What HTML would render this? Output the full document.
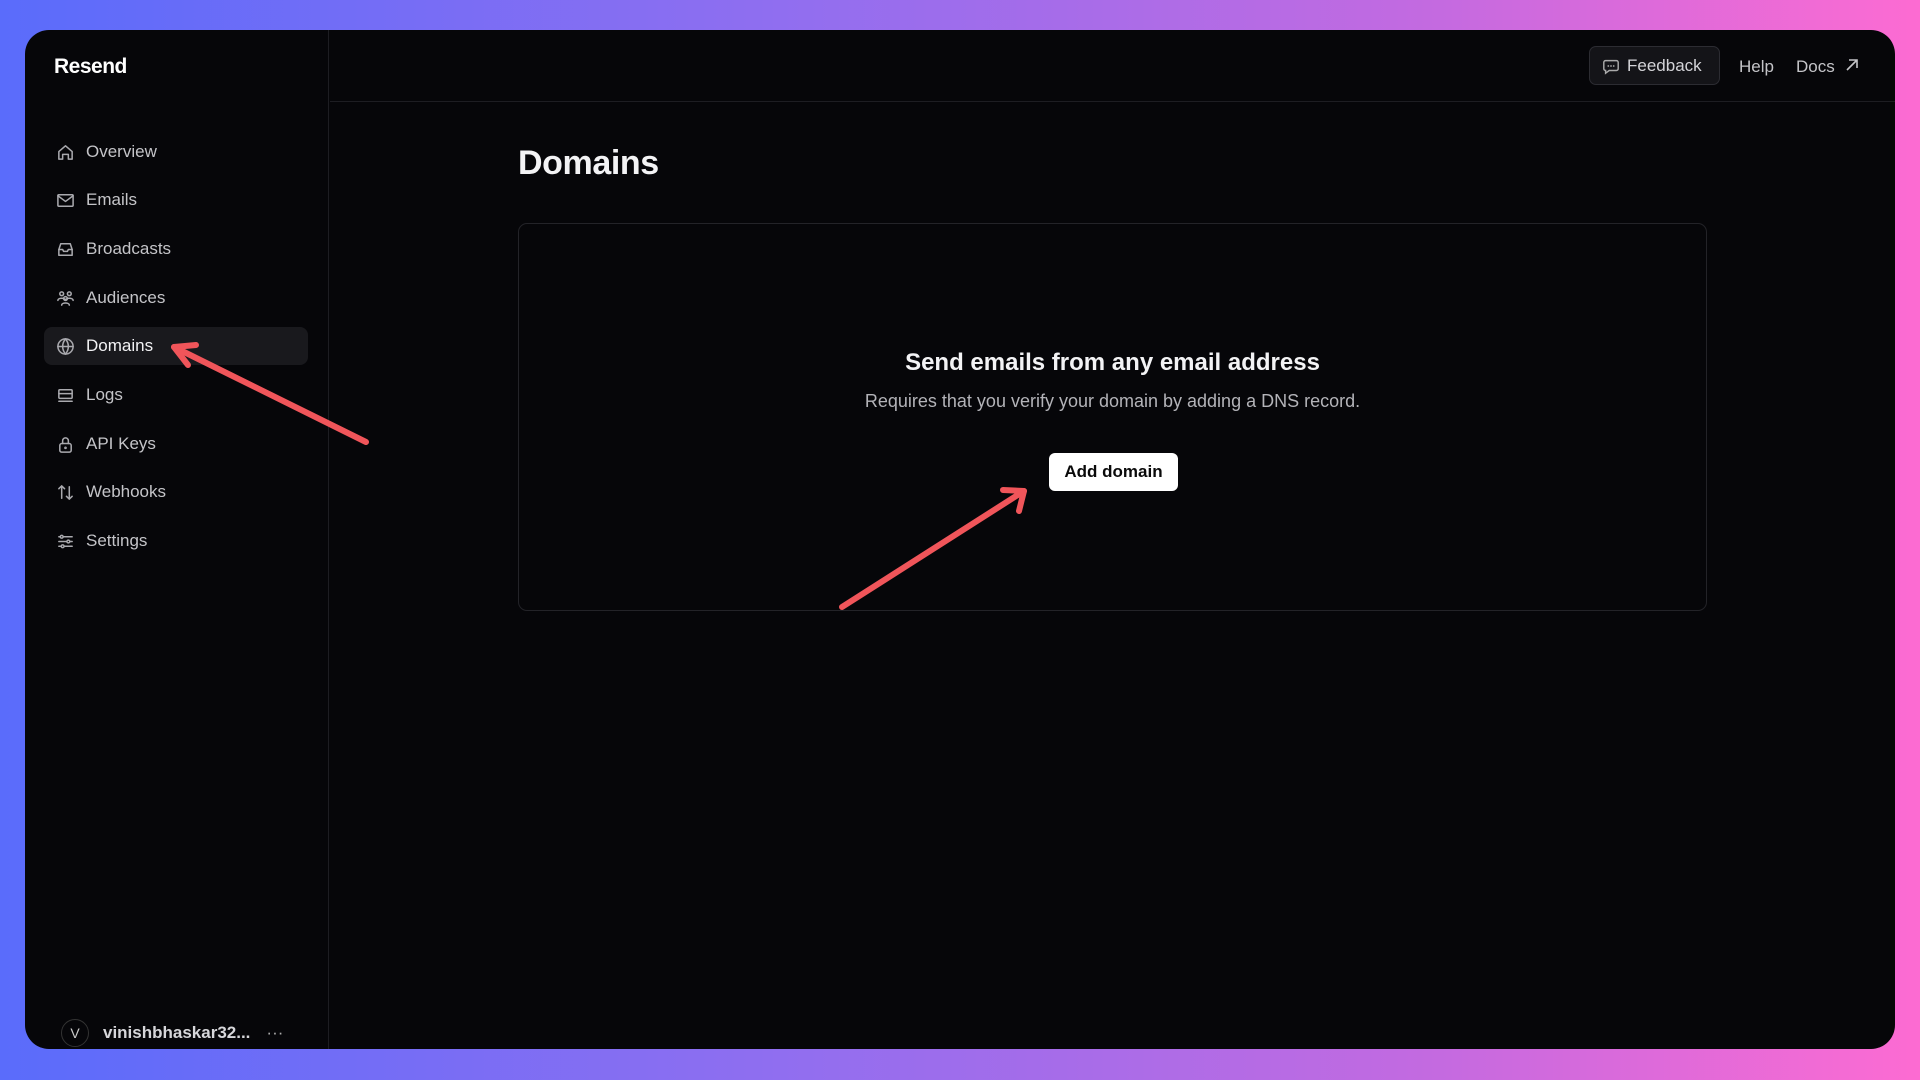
<!DOCTYPE html>
<html><head><meta charset="utf-8"><style>
*{margin:0;padding:0;box-sizing:border-box}
body{width:1920px;height:1080px;overflow:hidden;font-family:"Liberation Sans",sans-serif;background:linear-gradient(90deg,#5a6cfb 0%,#8f6ef0 40%,#c46ae0 75%,#fd6bd2 100%);position:relative}
.win{position:absolute;left:25px;top:30px;width:1870px;height:1019px;background:#060609;border-radius:24px;overflow:hidden}
.side{position:absolute;left:0;top:0;width:304px;height:100%;border-right:1px solid #1d1d22}
.logo{position:absolute;left:29px;top:25px;color:#fff;font-weight:bold;font-size:21px;letter-spacing:-0.5px}
.nav{position:absolute;left:19px;width:264px;height:38px;border-radius:8px;color:#c4c4c8;font-size:17px;display:flex;align-items:center;padding-left:12px}
.nav svg{width:19px;height:19px;margin-right:11px;stroke:#a9a9ae;fill:none;stroke-width:1.6;stroke-linecap:round;stroke-linejoin:round}
.nav.act{background:#19191d;color:#f2f2f4}
.hdr{position:absolute;left:305px;right:0;top:71px;border-top:1px solid #1d1d22}
.fb{position:absolute;left:1564px;top:16px;width:131px;height:39px;border:1px solid #2c2c32;border-radius:7px;background:#141418;color:#d4d4d8;font-size:17px;display:flex;align-items:center;padding-left:12px}
.top{position:absolute;top:27px;color:#c4c4c8;font-size:17px}
h1{position:absolute;left:493px;top:114px;color:#f3f3f5;font-size:34px;font-weight:bold;letter-spacing:-0.4px}
.card{position:absolute;left:493px;top:193px;width:1189px;height:388px;border:1px solid #232328;border-radius:9px;text-align:center}
.card h2{position:absolute;top:125px;width:100%;color:#f3f3f5;font-size:24px;font-weight:bold}
.card p{position:absolute;top:167px;width:100%;color:#b3b3b8;font-size:18px}
.btn{position:absolute;left:530px;top:229px;width:129px;height:38px;background:#fff;border-radius:6px;color:#0a0a0a;font-size:17px;font-weight:bold;line-height:38px}
.user{position:absolute;left:36px;top:989px;display:flex;align-items:center;color:#d6d6da;font-size:17px;font-weight:bold}
.av{width:28px;height:28px;border-radius:50%;border:1px solid #333;color:#ccc;font-size:14px;display:flex;align-items:center;justify-content:center;margin-right:14px;font-weight:normal}
</style></head><body>
<div class="win">
 <div class="side">
  <div class="logo">Resend</div>
  <div class="nav" style="top:103px"><svg viewBox="0 0 20 20"><path d="M3 9l7-6 7 6v8h-4v-5H7v5H3z"/></svg>Overview</div>
  <div class="nav" style="top:151px"><svg viewBox="0 0 20 20"><rect x="2" y="4" width="16" height="12" rx="1"/><path d="M2 5l8 6 8-6"/></svg>Emails</div>
  <div class="nav" style="top:200px"><svg viewBox="0 0 20 20"><path d="M3 10l2-6h10l2 6v6H3z"/><path d="M3 10h4l1 2h4l1-2h4"/></svg>Broadcasts</div>
  <div class="nav" style="top:249px"><svg viewBox="0 0 20 20"><circle cx="6" cy="5" r="2"/><circle cx="14" cy="5" r="2"/><circle cx="10" cy="10" r="2"/><path d="M2 12c0-3 8-3 8 0M10 12c0-3 8-3 8 0M6 17c0-3 8-3 8 0"/></svg>Audiences</div>
  <div class="nav act" style="top:297px"><svg viewBox="0 0 20 20"><circle cx="10" cy="10" r="8"/><path d="M2 10h16M10 2c-4 5-4 11 0 16M10 2c4 5 4 11 0 16"/></svg>Domains</div>
  <div class="nav" style="top:346px"><svg viewBox="0 0 20 20"><rect x="3" y="4" width="14" height="9" rx="1"/><path d="M3 16h14M3 8h14"/></svg>Logs</div>
  <div class="nav" style="top:395px"><svg viewBox="0 0 20 20"><rect x="4" y="9" width="12" height="9" rx="2"/><path d="M7 9V6a3 3 0 016 0v3"/><circle cx="10" cy="13.5" r=".6"/></svg>API Keys</div>
  <div class="nav" style="top:443px"><svg viewBox="0 0 20 20"><path d="M6 16V3M3 6l3-3 3 3M14 4v13M11 14l3 3 3-3"/></svg>Webhooks</div>
  <div class="nav" style="top:492px"><svg viewBox="0 0 20 20"><path d="M3 5h14M3 10h14M3 15h14"/><circle cx="6" cy="5" r="1.5" fill="#060609"/><circle cx="13" cy="10" r="1.5" fill="#060609"/><circle cx="7" cy="15" r="1.5" fill="#060609"/></svg>Settings</div>
  <div class="user"><div class="av">V</div>vinishbhaskar32...<span style="margin-left:16px;font-weight:normal;color:#aaa">···</span></div>
 </div>
 <div class="hdr"></div>
 <div class="fb"><svg width="18" height="18" viewBox="0 0 20 20" style="margin-right:7px" fill="none" stroke="#aaa" stroke-width="1.6"><path d="M4 4h12a2 2 0 012 2v7a2 2 0 01-2 2H8l-4 3v-3a2 2 0 01-2-2V6a2 2 0 012-2z"/><path d="M7 10h.01M10 10h.01M13 10h.01" stroke-linecap="round" stroke-width="2"/></svg>Feedback</div>
 <div class="top" style="left:1714px">Help</div>
 <div class="top" style="left:1771px">Docs <svg width="14" height="14" viewBox="0 0 14 14" style="margin-left:6px" fill="none" stroke="#c4c4c8" stroke-width="1.6"><path d="M2 12L12 2M4 2h8v8"/></svg></div>
 <h1>Domains</h1>
 <div class="card">
  <h2>Send emails from any email address</h2>
  <p>Requires that you verify your domain by adding a DNS record.</p>
  <div class="btn">Add domain</div>
 </div>
</div>
<svg width="1920" height="1080" style="position:absolute;left:0;top:0" fill="none" stroke="#f0555a" stroke-width="6" stroke-linecap="round" stroke-linejoin="round">
 <path d="M366 442L174 347"/><path d="M196 345L174 347L188 365"/>
 <path d="M842 607L1024 491"/><path d="M1003 490L1024 491L1019 511"/>
</svg>
</body></html>
